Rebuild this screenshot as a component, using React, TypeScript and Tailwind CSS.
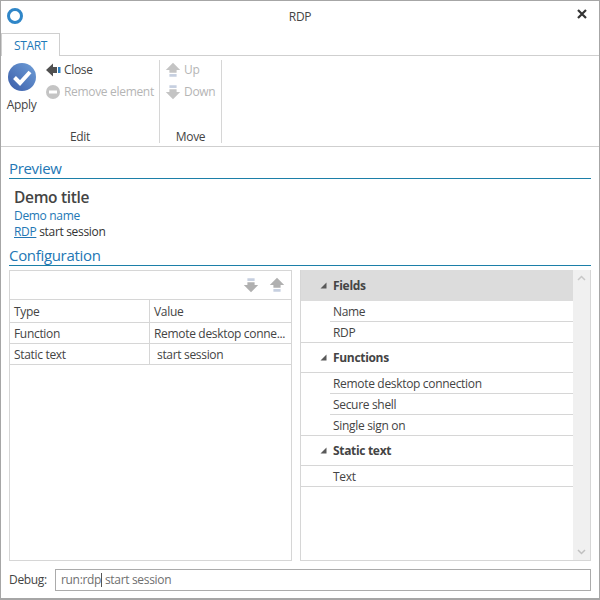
import React from "react";

const Arrow = ({ dir, color, bar, size = 20 }: { dir: "up" | "down" | "left"; color: string; bar: string; size?: number }) => {
  const rot = dir === "up" ? 0 : dir === "down" ? 180 : 270;
  return (
    <svg width={size} height={size} viewBox="0 0 20 20" style={{ transform: `rotate(${rot}deg)` }}>
      <path d="M10 2 L18 10 H14 V13 H6 V10 H2 Z" fill={color} />
      <rect x="6" y="14.5" width="8" height="3" fill={bar} />
    </svg>
  );
};

const Tri = () => (
  <svg width="7" height="7" viewBox="0 0 7 7" className="shrink-0">
    <path d="M6.5 0.5 V6.5 H0.5 Z" fill="#595959" />
  </svg>
);

const Group = ({ label, boxed }: { label: string; boxed?: boolean }) => (
  <div className={boxed ? "h-[30px] flex items-center pl-[19px] font-bold text-[#444444] gap-[6px] border-b border-[#d6d6d6]" : "h-[31px] flex items-center pl-[19px] font-bold text-[#444444] gap-[6px] bg-[#dcdcdc]"}>
    <Tri />
    <span>{label}</span>
  </div>
);

const Item = ({ label, last }: { label: string; last?: boolean }) => (
  <div className={last ? "h-[21px] flex items-center pl-[32px] pt-[1px] border-b border-[#d6d6d6] text-[#444444]" : "ml-[29px] h-[21px] flex items-center pl-[3px] pt-[1px] border-b border-[#d6d6d6] text-[#444444]"}>
    {label}
  </div>
);

const Row = ({ a, b, bClass = "pl-[4px]" }: { a: string; b: string; bClass?: string }) => (
  <div className="flex h-[21px] border-b border-[#d6d6d6] items-center text-[#444444]">
    <div className="w-[140px] pl-[4px] pt-[1px] h-full flex items-center border-r border-[#d6d6d6]">{a}</div>
    <div className={`pt-[1px] ${bClass}`}>{b}</div>
  </div>
);

export default function App() {
  return (
    <div
      className="w-[600px] h-[600px] border border-[#a6a6a6] border-b-2 flex flex-col bg-white text-[12px] overflow-hidden"
      style={{ fontFamily: '"Open Sans", "Noto Sans", sans-serif', letterSpacing: "-0.32px" }}
    >
      <div className="h-[32px] shrink-0 relative flex items-center justify-center text-[#444444]">
        <div className="absolute left-[6px] top-[7px] w-[16px] h-[16px] rounded-full border-[3px] border-[#2f86c8]" />
        <span>RDP</span>
        <svg className="absolute right-[11px] top-[7px]" width="12" height="12" viewBox="0 0 12 12">
          <path d="M2 2 L10 10 M10 2 L2 10" stroke="#333333" strokeWidth="2.2" />
        </svg>
      </div>

      <div className="h-[23px] shrink-0 border-b border-[#cfcfcf] flex">
        <div className="w-[59px] h-[23px] pt-[1px] border border-b-0 border-[#cfcfcf] bg-white flex items-center justify-center text-[#1f7ab8]">
          START
        </div>
      </div>

      <div className="h-[91px] shrink-0 border-b border-[#cfcfcf] flex pt-[4px]">
        <div className="w-[159px] h-[83px] border-r border-[#d6d6d6] flex flex-col">
          <div className="flex h-[64px]">
            <div className="w-[44px] flex flex-col items-center shrink-0">
              <svg width="30" height="30" viewBox="0 0 30 30" className="mt-[2px] ml-[-3px]">
                <defs>
                  <linearGradient id="g" x1="0" y1="1" x2="1" y2="0">
                    <stop offset="0" stopColor="#3a5ca8" />
                    <stop offset="1" stopColor="#6f9fd8" />
                  </linearGradient>
                </defs>
                <circle cx="15" cy="15" r="14" fill="url(#g)" />
                <path d="M7.5 15.5 L13 21 L23 10" fill="none" stroke="#ffffff" strokeWidth="4" />
              </svg>
              <span className="mt-[4px] ml-[-3px] text-[#444444]">Apply</span>
            </div>
            <div className="flex flex-col mt-[-1px] pl-[1px]">
              <div className="h-[22px] flex items-center gap-[3px] text-[#444444]">
                <svg width="15" height="14" viewBox="0 0 15 14">
                  <path d="M0 7 L7 0.5 V4 H11 V10 H7 V13.5 Z" fill="#505050" />
                  <rect x="12" y="4" width="2.5" height="6" fill="#2f7fc0" />
                </svg>
                <span>Close</span>
              </div>
              <div className="h-[22px] flex items-center gap-[4px] text-[#b5b5b5]">
                <svg width="14" height="14" viewBox="0 0 14 14">
                  <circle cx="7" cy="7" r="7" fill="#c4c4c4" />
                  <rect x="3" y="5.5" width="8" height="3" fill="#ffffff" />
                </svg>
                <span>Remove element</span>
              </div>
            </div>
          </div>
          <div className="mt-auto mb-[-3px] text-center text-[#444444]">Edit</div>
        </div>
        <div className="w-[62px] h-[83px] border-r border-[#d6d6d6] flex flex-col pl-[4px]">
          <div className="mt-[-1px]">
            <div className="h-[22px] flex items-center gap-[2px] text-[#b5b5b5]">
              <Arrow dir="up" color="#c4c4c4" bar="#c6cfe0" size={18} />
              <span>Up</span>
            </div>
            <div className="h-[22px] flex items-center gap-[2px] text-[#b5b5b5]">
              <Arrow dir="down" color="#c4c4c4" bar="#c6cfe0" size={18} />
              <span>Down</span>
            </div>
          </div>
          <div className="mt-auto mb-[-3px] text-center text-[#444444] pr-[4px]">Move</div>
        </div>
      </div>

      <div className="flex-1 flex flex-col pl-[8px] pr-[8px] min-h-0">
        <div className="mt-[12px] h-[20px] border-b border-[#1c7fa8] text-[15px] leading-[18px] text-[#2377b5]">Preview</div>
        <div className="pl-[5px] mt-[8px]">
          <div className="text-[15.5px] leading-[20px] font-semibold text-[#444444]">Demo title</div>
          <div className="text-[#2377b5] leading-[16px] mt-[1px]">Demo name</div>
          <div className="leading-[16px] text-[#333333]">
            <span className="underline text-[#2377b5]">RDP</span> start session
          </div>
        </div>
        <div className="mt-[6px] h-[20px] border-b border-[#1c7fa8] text-[15px] leading-[18px] text-[#2377b5]">Configuration</div>

        <div className="mt-[4px] flex gap-[8px] h-[291px] shrink-0">
          <div className="w-[283px] h-full border border-[#d6d6d6]">
            <div className="h-[29px] border-b border-[#d6d6d6] flex items-center justify-end gap-[8px] pr-[5px]">
              <Arrow dir="down" color="#b0b0b0" bar="#c6cfe0" size={18} />
              <Arrow dir="up" color="#b0b0b0" bar="#c6cfe0" size={18} />
            </div>
            <div className="flex h-[23px] border-b border-[#d6d6d6] items-center text-[#444444]">
              <div className="w-[140px] pl-[4px] pt-[1px] h-full flex items-center border-r border-[#d6d6d6]">Type</div>
              <div className="pl-[4px] pt-[1px]">Value</div>
            </div>
            <Row a="Function" b="Remote desktop conne..." />
            <Row a="Static text" b="start session" bClass="pl-[7px]" />
          </div>
          <div className="flex-1 h-full border border-t-0 border-[#d6d6d6] flex">
            <div className="flex-1">
              <Group label="Fields" />
              <Item label="Name" />
              <Item label="RDP" last />
              <Group label="Functions" boxed />
              <Item label="Remote desktop connection" />
              <Item label="Secure shell" />
              <Item label="Single sign on" last />
              <Group label="Static text" boxed />
              <Item label="Text" last />
            </div>
            <div className="w-[17px] bg-[#f0f0f0] flex flex-col items-center justify-between py-[5px]">
              <svg width="9" height="6" viewBox="0 0 9 6"><path d="M1 5 L4.5 1.5 L8 5" fill="none" stroke="#c8c8c8" strokeWidth="1.5" /></svg>
              <svg width="9" height="6" viewBox="0 0 9 6"><path d="M1 1 L4.5 4.5 L8 1" fill="none" stroke="#c0c0c0" strokeWidth="1.5" /></svg>
            </div>
          </div>
        </div>

        <div className="mt-[8px] flex items-center h-[22px] shrink-0">
          <span className="w-[46px] shrink-0 text-[#444444]">Debug:</span>
          <div className="flex-1 h-[22px] border border-[#ababab] pl-[5px] flex items-center text-[#6f6f6f]">
            <span>run:rdp</span>
            <span className="w-0 h-[14px] border-l border-[#555555]" />
            <span>&nbsp;start session</span>
          </div>
        </div>
      </div>
    </div>
  );
}
